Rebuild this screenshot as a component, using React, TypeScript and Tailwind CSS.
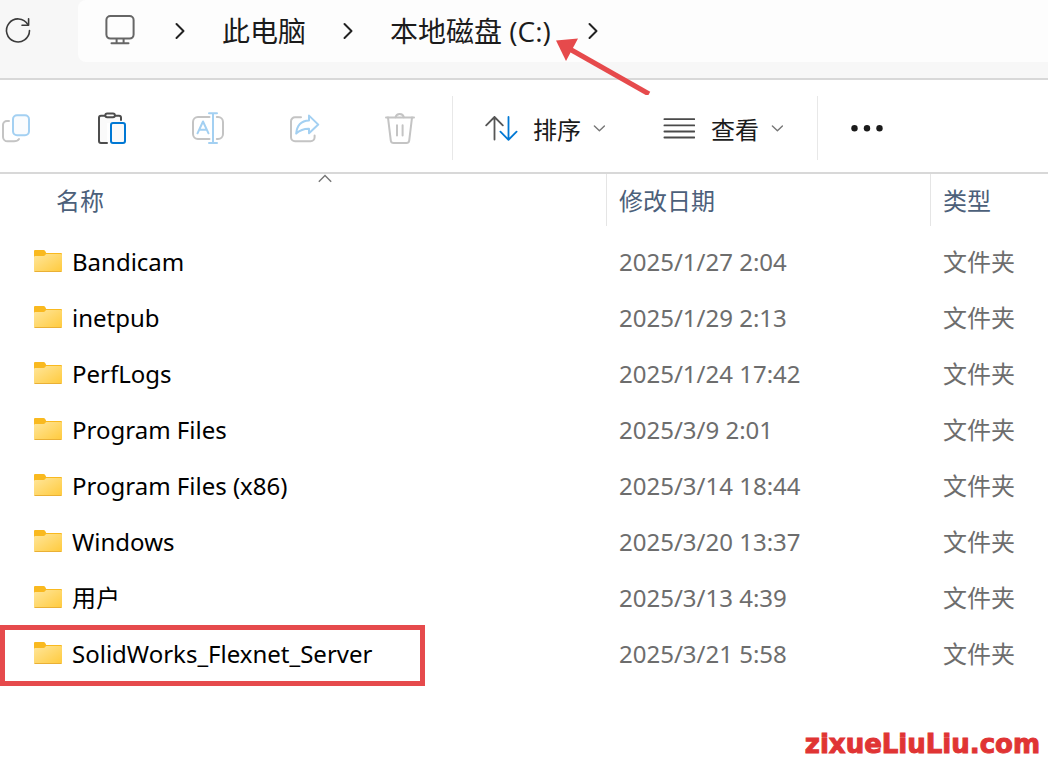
import type { ReactNode } from "react";

type Entry = { name: string; modified: string; marked?: boolean };

const entries: Entry[] = [
  { name: "Bandicam", modified: "2025/1/27 2:04" },
  { name: "inetpub", modified: "2025/1/29 2:13" },
  { name: "PerfLogs", modified: "2025/1/24 17:42" },
  { name: "Program Files", modified: "2025/3/9 2:01" },
  { name: "Program Files (x86)", modified: "2025/3/14 18:44" },
  { name: "Windows", modified: "2025/3/20 13:37" },
  { name: "用户", modified: "2025/3/13 4:39" },
  { name: "SolidWorks_Flexnet_Server", modified: "2025/3/21 5:58", marked: true },
];

const GREY = "#c4c4c4";
const PALE_BLUE = "#a3d0f2";
const DARK = "#4d4d4d";
const BLUE = "#0078d4";

function Icon({ width = 32, height = 32, children }: { width?: number; height?: number; children: ReactNode }) {
  return (
    <svg
      width={width}
      height={height}
      viewBox={`0 0 ${width} ${height}`}
      fill="none"
      strokeWidth="2"
      strokeLinecap="round"
      strokeLinejoin="round"
      className="shrink-0"
      aria-hidden="true"
    >
      {children}
    </svg>
  );
}

function RefreshIcon() {
  return (
    <Icon>
      <g stroke="#3a3a3a" strokeWidth="1.6">
        <path d="M27.5 15.5A11.5 11.5 0 1 1 25.8 9.4" />
        <path d="M26.6 3.8V10.2H20" />
      </g>
    </Icon>
  );
}

function MonitorIcon() {
  return (
    <Icon width={34}>
      <g stroke="#666666">
        <rect x="2.4" y="1" width="27.2" height="22.6" rx="4" />
        <path d="M12.6 24V28M19.6 24V28M7.5 28.3H24.5" />
      </g>
    </Icon>
  );
}

function Separator() {
  return (
    <Icon width={12} height={20}>
      <path d="M2.5 3L9.5 10L2.5 17" stroke="#222222" />
    </Icon>
  );
}

function ChevronDown() {
  return (
    <Icon width={12} height={12}>
      <path d="M1.4 4L6.4 8.8L11.4 4" stroke="#767676" strokeWidth="1.4" />
    </Icon>
  );
}

function CopyIcon() {
  return (
    <Icon>
      <path d="M9 9H7A4 4 0 0 0 3 13V25A4.5 4.5 0 0 0 7.5 29.3H14Q17.5 29.3 19 27" stroke={GREY} />
      <rect x="13" y="3.2" width="16" height="20" rx="4" fill="#fafcfe" stroke={PALE_BLUE} />
    </Icon>
  );
}

function PasteIcon() {
  return (
    <Icon>
      <path d="M9 4H5Q3 4 3 6V29Q3 31 5 31H11V11H25V4Z" fill="#fafafa" />
      <path d="M9 3.8H5Q3 3.8 3 5.8V29Q3 31 5 31H11M19.5 3.8H23Q25 3.8 25 5.8V8" stroke={DARK} />
      <rect x="9.3" y="1.4" width="9.6" height="3.8" rx="1.9" fill="#fafafa" stroke={DARK} />
      <rect x="15" y="11" width="14" height="20" rx="2" fill="#fafafa" stroke={BLUE} />
    </Icon>
  );
}

function RenameIcon() {
  return (
    <Icon>
      <path d="M17.5 5H6A5 5 0 0 0 1 10V22A5 5 0 0 0 6 27H17.5M24.8 5H26A5 5 0 0 1 31 10V22A5 5 0 0 1 26 27H24.8" stroke={GREY} />
      <path d="M21 1.3V31M17 1.3H25M17 31H25" stroke={PALE_BLUE} />
      <path d="M5.5 21.3L11 9.5L16.5 21.3M7.5 17.8H14.5" stroke={PALE_BLUE} />
    </Icon>
  );
}

function ShareIcon() {
  return (
    <Icon>
      <path d="M13 5.3H7A4 4 0 0 0 3 9.3V25.3A4 4 0 0 0 7 29.3H22.6A4 4 0 0 0 26.6 25.3V23.5" stroke={GREY} />
      <path d="M21 3.6L30.3 12.6L21 21.3V16.8C15.5 16.6 11.8 18.4 8.2 21.6C8.8 14 12.8 8.8 21 8.4Z" stroke={PALE_BLUE} />
    </Icon>
  );
}

function TrashIcon() {
  return (
    <Icon>
      <g stroke={GREY}>
        <path d="M2 5.4H30" />
        <path d="M11.6 5.2A4.2 4.2 0 0 1 19.8 5.2" />
        <path d="M4 5.6L6.8 28.6Q7.2 31 9.6 31H22.4Q24.8 31 25.2 28.6L28 5.6" />
        <path d="M13 13.2V23.4M18.6 13.2V23.4" />
      </g>
    </Icon>
  );
}

function SortIcon() {
  return (
    <Icon width={34}>
      <path d="M9.5 27.6V5M1.2 13.4L9.5 5L17.8 13.4" stroke="#565656" strokeWidth="1.8" />
      <path d="M23.5 5V27.6M15.4 19.6L23.5 27.8L31.6 19.6" stroke={BLUE} strokeWidth="1.8" />
    </Icon>
  );
}

function ViewIcon() {
  return (
    <Icon>
      <path d="M1.4 7.2H31.4M1.4 13.4H31.4M1.4 19.5H31.4M1.4 25.5H31.4" stroke="#4a4a4a" strokeWidth="1.8" />
    </Icon>
  );
}

function FolderIcon() {
  return (
    <svg width="28" height="24" viewBox="0 0 28 24" className="shrink-0" aria-hidden="true">
      <defs>
        <linearGradient id="folder-front" x1="0" y1="0" x2="1" y2="1">
          <stop offset="0" stopColor="#ffe69b" />
          <stop offset="1" stopColor="#ffca3c" />
        </linearGradient>
      </defs>
      <path d="M0 1Q0 0 1 0H9.5Q10.6 0 11.2 1L12.2 3H27Q28 3 28 4V9H0Z" fill="#f9b91f" />
      <path d="M0 7.2Q0 6 1.2 6H9.5Q10.5 6 11.2 5L12 4H27Q28 4 28 5V20.5Q28 22 26.5 22H1.5Q0 22 0 20.5Z" fill="url(#folder-front)" />
      <path d="M0.5 21.5H27.5" stroke="#eab035" strokeWidth="1" />
    </svg>
  );
}

function ToolButton({ label, children }: { label: string; children: ReactNode }) {
  return (
    <button type="button" aria-label={label} className="flex h-16 w-24 items-center justify-center">
      {children}
    </button>
  );
}

export default function App() {
  return (
    <div className="flex min-h-screen flex-col overflow-hidden bg-white font-['Noto_Sans','Noto_Sans_CJK_SC',sans-serif] text-2xl text-black">
      <header className="flex border-b-2 border-[#d8d8d8] bg-[#f7f7f7] pb-4">
        <button type="button" aria-label="刷新" className="flex w-[78px] shrink-0 items-center pl-0.5">
          <RefreshIcon />
        </button>
        <nav className="flex h-[62px] grow items-center gap-9 rounded-l-lg bg-[#fdfdfd] pl-[26px] font-['Open_Sans','Noto_Sans_CJK_SC',sans-serif] text-[28px] leading-9 whitespace-nowrap text-[#1b1b1b]">
          <MonitorIcon />
          <Separator />
          <a href="#pc">此电脑</a>
          <Separator />
          <div className="relative">
            <a href="#c">本地磁盘 (C:)</a>
            <svg width="96" height="58" viewBox="0 0 96 58" className="absolute top-6 left-full ml-1" aria-hidden="true">
              <path d="M12 10.5L94 57" stroke="#e64a4c" strokeWidth="5" />
              <path d="M1 3.5L23 1.5L11 24Z" fill="#e64a4c" />
            </svg>
          </div>
          <Separator />
        </nav>
      </header>

      <div className="flex h-[94px] items-center border-b-2 border-[#d8d8d8] pt-1 whitespace-nowrap text-[#1b1b1b]">
        <button type="button" aria-label="复制" className="flex h-16 w-16 items-center">
          <CopyIcon />
        </button>
        <ToolButton label="粘贴"><PasteIcon /></ToolButton>
        <ToolButton label="重命名"><RenameIcon /></ToolButton>
        <ToolButton label="共享"><ShareIcon /></ToolButton>
        <ToolButton label="删除"><TrashIcon /></ToolButton>
        <div className="ml-1 h-16 w-px bg-[#e8e8e8]" />
        <button type="button" className="ml-8 flex h-16 items-center gap-3">
          <SortIcon />
          <span className="pt-1 pl-0.5">排序</span>
          <ChevronDown />
        </button>
        <button type="button" className="ml-[58px] flex h-16 items-center gap-3">
          <ViewIcon />
          <span className="pt-1 pl-1">查看</span>
          <ChevronDown />
        </button>
        <div className="ml-[34px] h-16 w-px bg-[#e8e8e8]" />
        <button type="button" aria-label="更多" className="ml-8 flex h-16 items-center">
          <svg width="34" height="32" viewBox="0 0 34 32" fill="#1b1b1b" aria-hidden="true">
            <circle cx="4.5" cy="16.2" r="3.2" />
            <circle cx="17" cy="16.2" r="3.2" />
            <circle cx="29.5" cy="16.2" r="3.2" />
          </svg>
        </button>
      </div>

      <table className="w-full table-fixed border-collapse text-left whitespace-nowrap">
        <colgroup>
          <col className="w-[606px]" />
          <col className="w-[324px]" />
          <col />
        </colgroup>
        <thead className="text-[#4c607a]">
          <tr className="h-[60px] align-top">
            <th className="p-0 font-normal">
              <div className="relative ml-11 flex h-[52px] items-center pt-0.5 pl-3">
                名称
                <svg width="14" height="10" viewBox="0 0 14 10" fill="none" className="absolute top-0 left-1/2 -ml-[7px]" aria-hidden="true">
                  <path d="M0.8 7.8L7 1.6L13.2 7.8" stroke="#767676" strokeWidth="1.4" />
                </svg>
              </div>
            </th>
            <th className="p-0 font-normal">
              <div className="flex h-[52px] items-center border-l border-[#e5e5e5] pt-0.5 pl-3">修改日期</div>
            </th>
            <th className="p-0 font-normal">
              <div className="flex h-[52px] items-center border-l border-[#e5e5e5] pt-0.5 pl-3">类型</div>
            </th>
          </tr>
        </thead>
        <tbody className="text-[#6d6d6d]">
          {entries.map((entry) => (
            <tr key={entry.name} className="h-14">
              <td className="relative p-0 text-black">
                <div className="flex items-center gap-2.5 pl-[34px]">
                  <FolderIcon />
                  <span>{entry.name}</span>
                </div>
                {entry.marked && (
                  <div className="absolute -top-px -bottom-1 left-0 w-[425px] border-[5px] border-[#e64a4c]" />
                )}
              </td>
              <td className="p-0 pl-[13px]">{entry.modified}</td>
              <td className="p-0 pl-[13px]">文件夹</td>
            </tr>
          ))}
        </tbody>
      </table>

      <footer className="mt-auto pr-2 pb-1 text-right font-['DejaVu_Sans',sans-serif] text-[26px] leading-8 font-bold text-[#e03434] [-webkit-text-stroke:1px_#e03434]">
        zixueLiuLiu.com
      </footer>
    </div>
  );
}
